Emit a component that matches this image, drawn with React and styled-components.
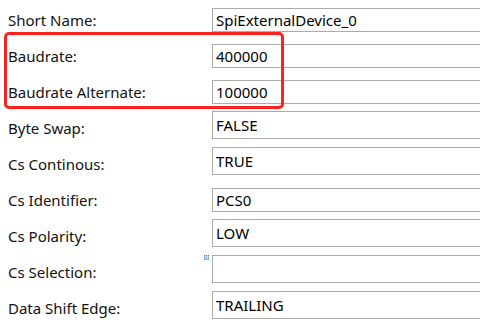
import React from "react";
import styled, { createGlobalStyle } from "styled-components";

const Global = createGlobalStyle`
  html, body { margin: 0; padding: 0; background: #ffffff; }
  body { width: 480px; height: 330px; overflow: hidden; }
`;

const Page = styled.div`
  position: relative;
  width: 480px;
  height: 330px;
  overflow: hidden;
  background: #ffffff;
  font-family: "Noto Sans", "Open Sans", sans-serif;
  font-size: 15px;
  color: #000000;
`;

const Form = styled.div`
  display: flex;
  flex-direction: column;
`;

const Row = styled.div`
  display: grid;
  grid-template-columns: 212px 290px;
  height: 36px;
  align-items: start;
`;

const Label = styled.div`
  padding-left: 8px;
  line-height: 24px;
  margin-top: 8px;
  white-space: nowrap;
  color: #111111;
`;

const Field = styled.div`
  box-sizing: border-box;
  margin-top: ${(p) => (p.$tall ? 3 : 8)}px;
  height: ${(p) => (p.$tall ? 28 : 24)}px;
  line-height: ${(p) => (p.$tall ? 26 : 22)}px;
  border: 1px solid #acacac;
  background: #ffffff;
  padding-left: 3px;
  white-space: nowrap;
`;

const Marker = styled.span`
  position: absolute;
  left: 204px;
  top: 255px;
  width: 5px;
  height: 5px;
  box-sizing: border-box;
  border: 1px dotted #3f7fd6;
  background: #b9d3f3;
`;

const Highlight = styled.div`
  position: absolute;
  left: 4px;
  top: 32px;
  width: 280px;
  height: 77px;
  box-sizing: border-box;
  border: 3px solid #ff2020;
  border-radius: 5px;
  pointer-events: none;
`;

const rows = [
  { label: "Short Name:", value: "SpiExternalDevice_0", tall: false },
  { label: "Baudrate:", value: "400000", tall: false },
  { label: "Baudrate Alternate:", value: "100000", tall: false },
  { label: "Byte Swap:", value: "FALSE", tall: true },
  { label: "Cs Continous:", value: "TRUE", tall: true },
  { label: "Cs Identifier:", value: "PCS0", tall: false },
  { label: "Cs Polarity:", value: "LOW", tall: true },
  { label: "Cs Selection:", value: "", tall: true },
  { label: "Data Shift Edge:", value: "TRAILING", tall: true },
];

export default function App() {
  return (
    <>
      <Global />
      <Page>
        <Form>
          {rows.map((r) => (
            <Row key={r.label}>
              <Label>{r.label}</Label>
              <Field $tall={r.tall}>{r.value}</Field>
            </Row>
          ))}
        </Form>
        <Marker />
        <Highlight />
      </Page>
    </>
  );
}
